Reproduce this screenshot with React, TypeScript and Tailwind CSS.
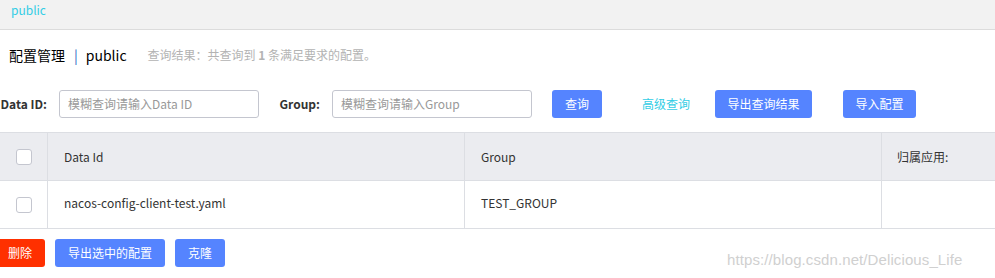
const font = "font-['Noto_Sans_CJK_SC','Noto_Sans',sans-serif]";

function Checkbox() {
  return (
    <span className="block w-[16px] h-[16px] rounded-[3px] border border-[#c4c6cf] bg-white" />
  );
}

function Btn({ w, children, red }: { w: string; children: React.ReactNode; red?: boolean }) {
  return (
    <button
      className={`${w} h-[28px] rounded-[3px] text-white text-[12px] flex items-center justify-center shrink-0 ${
        red ? "bg-[#ff3000]" : "bg-[#5584ff]"
      }`}
    >
      {children}
    </button>
  );
}

export default function App() {
  return (
    <div className={`relative w-[995px] h-[278px] overflow-hidden bg-white text-[#333] ${font}`}>
      {/* Breadcrumb bar */}
      <div className="h-[30px] bg-[#f2f2f2] border-b border-[#dcdcdc] pl-[11px]">
        <div className="text-[12px] leading-[20px] text-[#33cde5]">public</div>
      </div>

      {/* Title */}
      <div className="mt-[15px] h-[20px] flex items-center pl-[9px]">
        <span className="text-[14px] text-black">配置管理</span>
        <span className="text-[14px] text-[#2f6bc4] ml-[9px]">|</span>
        <span className="text-[14px] text-black ml-[8px]">public</span>
        <span className="text-[12px] text-[#b3b3b3] ml-[21px]">
          查询结果：共查询到 <span className="font-bold">1</span> 条满足要求的配置。
        </span>
      </div>

      {/* Search row */}
      <div className="mt-[25px] h-[28px] flex items-center ml-[-10px]">
        <label className="w-[57px] text-right text-[12px] font-bold text-[#333]">Data ID:</label>
        <div className="ml-[12px] w-[200px] h-[28px] border border-[#c4c6cf] rounded-[3px] flex items-center px-[8px] text-[12px] text-[#999]">
          模糊查询请输入Data ID
        </div>
        <label className="w-[61px] text-right text-[12px] font-bold text-[#333]">Group:</label>
        <div className="ml-[12px] w-[200px] h-[28px] border border-[#c4c6cf] rounded-[3px] flex items-center px-[8px] text-[12px] text-[#999]">
          模糊查询请输入Group
        </div>
        <div className="ml-[20px]">
          <Btn w="w-[50px]">查询</Btn>
        </div>
        <span className="ml-[40px] text-[12px] text-[#33cde5]">高级查询</span>
        <div className="ml-[25px]">
          <Btn w="w-[97px]">导出查询结果</Btn>
        </div>
        <div className="ml-[31px]">
          <Btn w="w-[73px]">导入配置</Btn>
        </div>
      </div>

      {/* Table */}
      <div className="mt-[14px] w-[1100px] text-[12px]">
        <div className="flex h-[49px] bg-[#ebecf0] border-y border-[#dcdee3]">
          <div className="w-[47px] flex items-center justify-center">
            <Checkbox />
          </div>
          <div className="w-[417px] border-l border-[#dcdee3] flex items-center pl-[16px]">Data Id</div>
          <div className="w-[417px] border-l border-[#dcdee3] flex items-center pl-[16px]">Group</div>
          <div className="flex-1 border-l border-[#dcdee3] flex items-center pl-[15px]">归属应用:</div>
        </div>
        <div className="flex h-[48px] border-b border-[#dcdee3]">
          <div className="w-[47px] flex items-center justify-center">
            <Checkbox />
          </div>
          <div className="w-[417px] border-l border-[#dcdee3] flex items-center pl-[16px] pb-[3px]">
            nacos-config-client-test.yaml
          </div>
          <div className="w-[417px] border-l border-[#dcdee3] flex items-center pl-[16px] pb-[3px]">
            TEST_GROUP
          </div>
          <div className="flex-1 border-l border-[#dcdee3]" />
        </div>
      </div>

      {/* Batch actions */}
      <div className="mt-[10px] flex items-center gap-[10px] ml-[-5px]">
        <Btn w="w-[50px]" red>
          删除
        </Btn>
        <Btn w="w-[110px]">导出选中的配置</Btn>
        <Btn w="w-[50px]">克隆</Btn>
      </div>

      {/* Watermark */}
      <span className="absolute left-[727px] top-[249px] text-[15px] tracking-[0.1px] text-[#d0d0d0] font-['Liberation_Sans',sans-serif]">
        https://blog.csdn.net/Delicious_Life
      </span>
    </div>
  );
}
